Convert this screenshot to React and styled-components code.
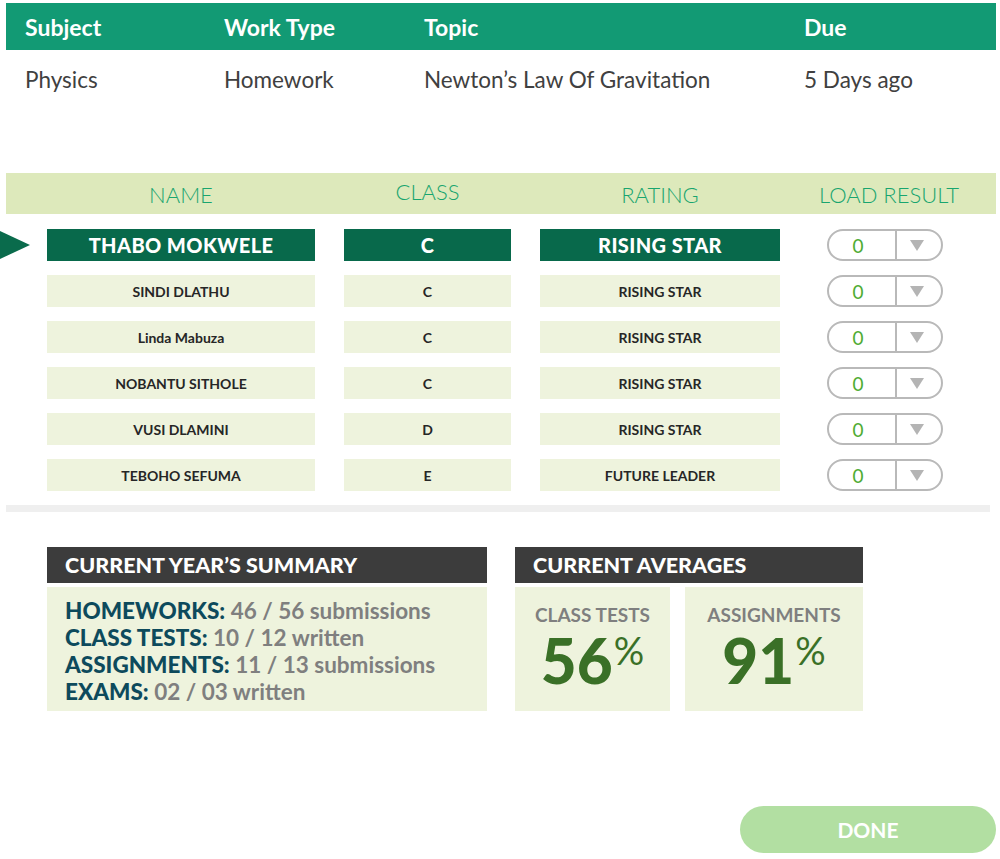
import React from 'react';
import styled, {createGlobalStyle} from 'styled-components';

const GlobalStyle = createGlobalStyle`
  body {
    margin: 0;
    background: #fff;
    font-family: Lato, "Open Sans", sans-serif;
  }
`;

const students = [
  {name: 'THABO MOKWELE', cls: 'C', rating: 'RISING STAR', active: true},
  {name: 'SINDI DLATHU', cls: 'C', rating: 'RISING STAR'},
  {name: 'Linda Mabuza', cls: 'C', rating: 'RISING STAR'},
  {name: 'NOBANTU SITHOLE', cls: 'C', rating: 'RISING STAR'},
  {name: 'VUSI DLAMINI', cls: 'D', rating: 'RISING STAR'},
  {name: 'TEBOHO SEFUMA', cls: 'E', rating: 'FUTURE LEADER'},
];

const summary = [
  {label: 'HOMEWORKS:', value: '46 / 56 submissions'},
  {label: 'CLASS TESTS:', value: '10 / 12 written'},
  {label: 'ASSIGNMENTS:', value: '11 / 13 submissions'},
  {label: 'EXAMS:', value: '02 / 03 written'},
];

const App = () => {
  return (
    <Page>
      <GlobalStyle />
      <WorkTable>
        <WorkHead>
          <span>Subject</span>
          <span>Work Type</span>
          <span>Topic</span>
          <span>Due</span>
        </WorkHead>
        <WorkRow>
          <span>Physics</span>
          <span>Homework</span>
          <span>Newton’s Law Of Gravitation</span>
          <span>5 Days ago</span>
        </WorkRow>
      </WorkTable>

      <Band>
        <Cols $lead={12}>
          <span />
          <BandLabel>NAME</BandLabel>
          <BandLabel $up>CLASS</BandLabel>
          <BandLabel>RATING</BandLabel>
          <BandLabel $left>LOAD RESULT</BandLabel>
        </Cols>
      </Band>

      <Rows>
        {students.map(s => (
          <Cols key={s.name} $lead={18}>
            <Pointer>
              {s.active && (
                <svg width="30" height="28" viewBox="0 0 30 28">
                  <polygon points="0,0 30,14 0,28" fill="#0a6b4c" />
                </svg>
              )}
            </Pointer>
            <Cell $active={s.active}>{s.name}</Cell>
            <Cell $active={s.active}>{s.cls}</Cell>
            <Cell $active={s.active}>{s.rating}</Cell>
            <Select>
              <SelectValue>0</SelectValue>
              <SelectArrow>
                <svg width="14" height="11" viewBox="0 0 14 11">
                  <polygon points="0,0 14,0 7,11" fill="#b4b4b4" />
                </svg>
              </SelectArrow>
            </Select>
          </Cols>
        ))}
      </Rows>

      <Divider />

      <Summary>
        <Panel $w={440}>
          <PanelHead>CURRENT YEAR’S SUMMARY</PanelHead>
          <SummaryBody>
            {summary.map(item => (
              <SummaryLine key={item.label}>
                <b>{item.label}</b> {item.value}
              </SummaryLine>
            ))}
          </SummaryBody>
        </Panel>
        <Panel $w={348}>
          <PanelHead>CURRENT AVERAGES</PanelHead>
          <Averages>
            <AvgBox>
              <AvgLabel>CLASS TESTS</AvgLabel>
              <AvgValue>56<sup>%</sup></AvgValue>
            </AvgBox>
            <AvgBox>
              <AvgLabel>ASSIGNMENTS</AvgLabel>
              <AvgValue>91<sup>%</sup></AvgValue>
            </AvgBox>
          </Averages>
        </Panel>
      </Summary>

      <Footer>
        <DoneButton>DONE</DoneButton>
      </Footer>
    </Page>
  );
};

const Page = styled.div`
  width: 1000px;
  height: 859px;
  padding-top: 3px;
  box-sizing: border-box;
`;

const WorkTable = styled.div`
  margin: 0 4px 0 6px;
`;

const WorkHead = styled.div`
  display: grid;
  grid-template-columns: 199px 200px 380px 211px;
  align-items: center;
  height: 47px;
  background: #129a74;
  color: #fff;
  font-size: 23px;
  font-weight: 700;
  span {
    padding-left: 19px;
    white-space: nowrap;
  }
`;

const WorkRow = styled(WorkHead)`
  height: 58px;
  background: transparent;
  color: #404040;
  font-size: 22.5px;
  font-weight: 400;
`;

const Band = styled.div`
  margin: 65px 4px 0 6px;
  height: 41px;
  background: #dde9bb;
  display: flex;
  align-items: center;
`;

const Cols = styled.div`
  display: grid;
  grid-template-columns: ${p => p.$lead}px 268px 167px 240px 134px;
  column-gap: 29px;
  align-items: center;
`;

const BandLabel = styled.span`
  text-align: ${p => (p.$left ? 'left' : 'center')};
  white-space: nowrap;
  color: #18a56f;
  font-size: 22px;
  font-weight: 300;
  position: relative;
  top: ${p => (p.$up ? '-2px' : '1px')};
  margin-left: ${p => (p.$left ? '10px' : '0')};
`;

const Rows = styled.div`
  margin-top: 15px;
  display: flex;
  flex-direction: column;
  gap: 14px;
`;

const Pointer = styled.div`
  height: 28px;
  display: flex;
  align-items: center;
  svg {
    flex-shrink: 0;
  }
`;

const Cell = styled.div`
  height: 32px;
  display: flex;
  align-items: center;
  justify-content: center;
  background: ${p => (p.$active ? '#08694b' : '#eef3dd')};
  color: ${p => (p.$active ? '#fff' : '#262626')};
  font-size: ${p => (p.$active ? '20px' : '14px')};
  font-weight: ${p => (p.$active ? 900 : 700)};
  letter-spacing: ${p => (p.$active ? '0.4px' : '0')};
`;

const Select = styled.div`
  justify-self: end;
  width: 116px;
  height: 32px;
  box-sizing: border-box;
  border: 2px solid #b9b9b9;
  border-radius: 16px;
  display: flex;
`;

const SelectValue = styled.div`
  width: 68px;
  padding-right: 8px;
  box-sizing: border-box;
  border-right: 2px solid #b9b9b9;
  display: flex;
  align-items: center;
  justify-content: center;
  color: #4fac33;
  font-size: 19px;
`;

const SelectArrow = styled.div`
  flex: 1;
  display: flex;
  align-items: center;
  justify-content: center;
  padding-right: 4px;
`;

const Divider = styled.div`
  margin: 14px 10px 0 6px;
  height: 7px;
  background: #efefef;
`;

const Summary = styled.div`
  margin-top: 35px;
  padding-left: 47px;
  display: flex;
  gap: 28px;
`;

const Panel = styled.div`
  width: ${p => p.$w}px;
  display: flex;
  flex-direction: column;
  gap: 4px;
`;

const PanelHead = styled.div`
  height: 36px;
  background: #3c3c3c;
  color: #fff;
  font-size: 21.5px;
  font-weight: 900;
  display: flex;
  align-items: center;
  padding-left: 18px;
  white-space: nowrap;
`;

const SummaryBody = styled.div`
  height: 124px;
  box-sizing: border-box;
  background: #eef3dd;
  padding: 10px 18px;
`;

const SummaryLine = styled.div`
  font-size: 22.5px;
  line-height: 27px;
  font-weight: 700;
  color: #7f7f7f;
  white-space: nowrap;
  b {
    color: #0d4a5c;
    font-weight: 900;
  }
`;

const Averages = styled.div`
  display: grid;
  grid-template-columns: 155px 178px;
  gap: 15px;
`;

const AvgBox = styled.div`
  height: 124px;
  background: #eef3dd;
  display: flex;
  flex-direction: column;
  align-items: center;
  padding-top: 16px;
  box-sizing: border-box;
`;

const AvgLabel = styled.div`
  color: #7f7f7f;
  font-size: 19px;
  font-weight: 700;
`;

const AvgValue = styled.div`
  color: #3a7027;
  font-size: 62px;
  font-weight: 900;
  line-height: 64px;
  margin-top: 2px;
  white-space: nowrap;
  sup {
    font-size: 38px;
    font-weight: 400;
    vertical-align: top;
    position: relative;
    top: -10px;
    margin-left: 1px;
  }
`;

const Footer = styled.div`
  margin-top: 95px;
  padding-right: 4px;
  display: flex;
  justify-content: flex-end;
`;

const DoneButton = styled.button`
  width: 256px;
  height: 47px;
  border: none;
  border-radius: 24px;
  background: #b2dfa2;
  color: #fff;
  font-family: Lato, "Open Sans", sans-serif;
  font-size: 21px;
  font-weight: 700;
  cursor: pointer;
`;

export default App;
